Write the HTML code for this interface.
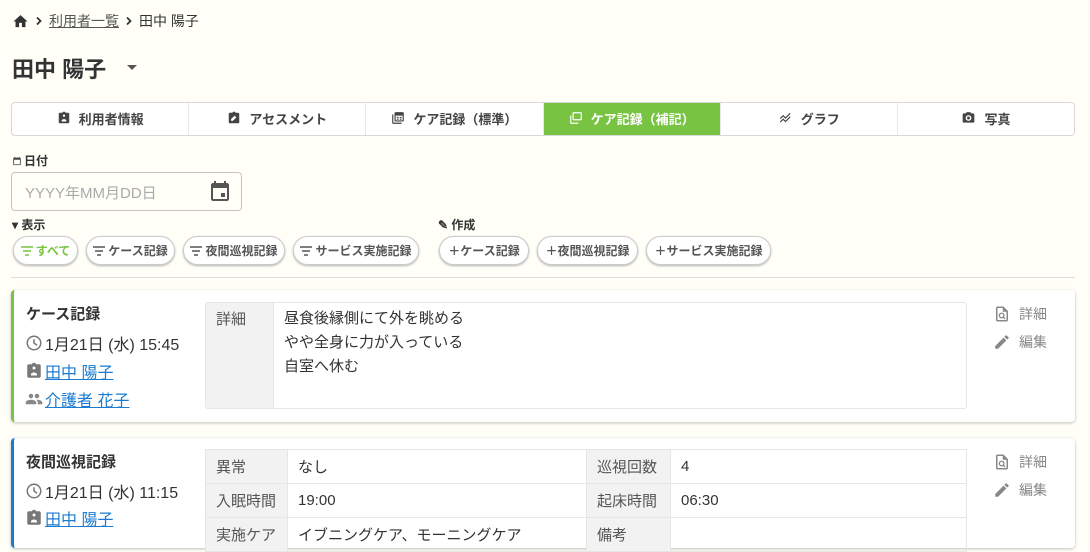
<!DOCTYPE html>
<html><head><meta charset="utf-8">
<style>
*{box-sizing:border-box;margin:0;padding:0}
body{width:1090px;height:530px;overflow:hidden;background:#fffff8;font-family:"Liberation Sans","Noto Sans CJK JP",sans-serif;color:#333;position:relative}
.abs{position:absolute}
svg{display:inline-block;vertical-align:middle}
.tabs{left:11px;top:102px;width:1064px;height:34px;border:1px solid #d8d8d8;border-radius:4px;background:#fff;display:flex;overflow:hidden}
.tab{flex:1;display:flex;align-items:center;justify-content:center;font-size:13px;font-weight:bold;color:#444;border-right:1px solid #e8e8e8;gap:8px;padding-bottom:2px}
.tab:last-child{border-right:none}
.tab.on{background:#79c342;color:#fff}
.chip{position:absolute;top:236px;height:29px;border:1px solid #ccc;border-radius:15px;background:#fff;box-shadow:0 1px 2px rgba(0,0,0,.3);font-size:12px;display:flex;align-items:center;justify-content:center;color:#555;font-weight:bold;gap:3px}
.card{position:absolute;left:11px;width:1064px;background:#fff;border-radius:4px;box-shadow:0 1px 3px rgba(0,0,0,.25)}
.ttl{position:absolute;left:12px;font-size:15px;font-weight:bold;color:#333}
.meta{position:absolute;left:11px;font-size:16px;color:#333;display:flex;align-items:center;gap:2px}
.meta a{color:#1a7bd0;text-decoration:underline}
.act{position:absolute;left:979px;font-size:14px;color:#888;display:flex;align-items:center;gap:8px}
table{border-collapse:collapse;font-size:15px}
td{border:1px solid #e6e6e6;padding:0 10px;height:34px}
td.l{background:#f2f2f2;color:#555}
</style></head><body>

<div class="abs" style="left:12px;top:11px;font-size:14px;display:flex;align-items:center;gap:5px;color:#333">
<svg width="17" height="17" viewBox="0 0 24 24"><path d="M10 20v-6h4v6h5v-8h3L12 3 2 12h3v8z" fill="#333"/></svg>
<svg width="10" height="10" viewBox="0 0 10 10"><path d="M3 1.5L6.5 5 3 8.5" stroke="#333" stroke-width="1.8" fill="none"/></svg><span style="text-decoration:underline;color:#555">利用者一覧</span><svg width="10" height="10" viewBox="0 0 10 10"><path d="M3 1.5L6.5 5 3 8.5" stroke="#333" stroke-width="1.8" fill="none"/></svg><span>田中 陽子</span></div>

<div class="abs" style="left:12px;top:52px;font-size:22px;font-weight:bold;color:#333">田中 陽子</div>
<svg class="abs" style="left:126px;top:64px" width="12" height="7" viewBox="0 0 12 7"><path d="M1 1l5 5 5-5z" fill="#555"/></svg>

<div class="abs tabs">
<div class="tab"><svg width="14" height="14" viewBox="0 0 24 24"><path d="M19 3h-4.2C14.4 1.8 13.3 1 12 1s-2.4.8-2.8 2H5c-1.1 0-2 .9-2 2v14c0 1.1.9 2 2 2h14c1.1 0 2-.9 2-2V5c0-1.1-.9-2-2-2zm-7 3a2 2 0 110 4 2 2 0 010-4zm4 12H8v-1.5c0-1.7 2.7-2.5 4-2.5s4 .8 4 2.5z" fill="#444"/></svg>利用者情報</div>
<div class="tab"><svg width="14" height="14" viewBox="0 0 24 24"><path d="M19 3h-4.2C14.4 1.8 13.3 1 12 1s-2.4.8-2.8 2H5c-1.1 0-2 .9-2 2v14c0 1.1.9 2 2 2h14c1.1 0 2-.9 2-2V5c0-1.1-.9-2-2-2zM10 17H7v-3l6-6 3 3z" fill="#444"/></svg>アセスメント</div>
<div class="tab"><svg width="14" height="14" viewBox="0 0 24 24"><path d="M4 6H2v14c0 1.1.9 2 2 2h14v-2H4zm16-4H8c-1.1 0-2 .9-2 2v12c0 1.1.9 2 2 2h12c1.1 0 2-.9 2-2V4c0-1.1-.9-2-2-2zm0 14H8V8h12z M10 10h3v2h-3zm5 0h3v2h-3zm-5 3h3v2h-3zm5 0h3v2h-3z" fill="#444"/></svg>ケア記録（標準）</div>
<div class="tab on"><svg width="14" height="14" viewBox="0 0 24 24"><path d="M4 8H2v12c0 1.1.9 2 2 2h12v-2H4zm16-6H8c-1.1 0-2 .9-2 2v10c0 1.1.9 2 2 2h12c1.1 0 2-.9 2-2V4c0-1.1-.9-2-2-2zm0 12H8V4h12z" fill="#fff"/></svg>ケア記録（補記）</div>
<div class="tab"><svg width="15" height="14" viewBox="0 0 24 24"><path d="M3 13l5-5 4 4 8-8M3 19l5-5 4 4 8-8" stroke="#444" stroke-width="2" fill="none"/></svg>グラフ</div>
<div class="tab"><svg width="15" height="14" viewBox="0 0 24 24"><path d="M9 2L7.2 4H4c-1.1 0-2 .9-2 2v12c0 1.1.9 2 2 2h16c1.1 0 2-.9 2-2V6c0-1.1-.9-2-2-2h-3.2L15 2zm3 15a5 5 0 110-10 5 5 0 010 10zm0-2.5a2.5 2.5 0 100-5 2.5 2.5 0 000 5z" fill="#444"/></svg>写真</div>
</div>

<div class="abs" style="left:12px;top:152px;font-size:12px;font-weight:bold;display:flex;align-items:center;gap:2px"><svg width="10" height="10" viewBox="0 0 24 24"><path d="M19 4h-1V2h-2v2H8V2H6v2H5c-1.1 0-2 .9-2 2v14c0 1.1.9 2 2 2h14c1.1 0 2-.9 2-2V6c0-1.1-.9-2-2-2zm0 16H5V9h14z" fill="#444"/></svg>日付</div>
<div class="abs" style="left:11px;top:172px;width:231px;height:39px;border:1px solid #c4c4c4;border-radius:4px;background:#fffff8"></div>
<div class="abs" style="left:25px;top:182px;font-size:15px;color:#aaa">YYYY年MM月DD日</div>
<svg class="abs" style="left:208px;top:179px" width="24" height="24" viewBox="0 0 24 24"><path d="M19 4h-1V2h-2v2H8V2H6v2H5c-1.1 0-2 .9-2 2v14c0 1.1.9 2 2 2h14c1.1 0 2-.9 2-2V6c0-1.1-.9-2-2-2zm0 16H5V9h14zm-6-6h4v4h-4z" fill="#555"/></svg>

<div class="abs" style="left:12px;top:216px;font-size:12px;font-weight:bold">▾ 表示</div>
<div class="abs" style="left:438px;top:216px;font-size:12px;font-weight:bold">✎ 作成</div>

<div class="chip" style="left:13px;width:65px;color:#79c342"><svg width="12" height="10" viewBox="0 0 12 10"><path d="M0 1h12M2 5h8M4 9h4" stroke="#79c342" stroke-width="1.5"/></svg>すべて</div>
<div class="chip" style="left:86px;width:89px"><svg width="12" height="10" viewBox="0 0 12 10"><path d="M0 1h12M2 5h8M4 9h4" stroke="#555" stroke-width="1.5"/></svg>ケース記録</div>
<div class="chip" style="left:183px;width:102px"><svg width="12" height="10" viewBox="0 0 12 10"><path d="M0 1h12M2 5h8M4 9h4" stroke="#555" stroke-width="1.5"/></svg>夜間巡視記録</div>
<div class="chip" style="left:293px;width:126px"><svg width="12" height="10" viewBox="0 0 12 10"><path d="M0 1h12M2 5h8M4 9h4" stroke="#555" stroke-width="1.5"/></svg>サービス実施記録</div>
<div class="chip" style="left:439px;width:90px">＋ケース記録</div>
<div class="chip" style="left:537px;width:101px">＋夜間巡視記録</div>
<div class="chip" style="left:646px;width:125px">＋サービス実施記録</div>

<div class="abs" style="left:11px;top:277px;width:1064px;height:1px;background:#ddd"></div>

<div class="card" style="top:290px;height:132px;border-left:3px solid #79c342">
<div class="ttl" style="top:13px">ケース記録</div>
<div class="meta" style="top:41px"><svg width="18" height="18" viewBox="0 0 24 24"><circle cx="12" cy="12" r="9" stroke="#777" stroke-width="2" fill="none"/><path d="M12 7v5l4 3" stroke="#777" stroke-width="2" fill="none"/></svg>1月21日 (水) 15:45</div>
<div class="meta" style="top:69px"><svg width="18" height="18" viewBox="0 0 24 24"><path d="M19 3h-4.2C14.4 1.8 13.3 1 12 1s-2.4.8-2.8 2H5c-1.1 0-2 .9-2 2v14c0 1.1.9 2 2 2h14c1.1 0 2-.9 2-2V5c0-1.1-.9-2-2-2zm-7 3a2 2 0 110 4 2 2 0 010-4zm4 12H8v-1.5c0-1.7 2.7-2.5 4-2.5s4 .8 4 2.5z" fill="#777"/></svg><a>田中 陽子</a></div>
<div class="meta" style="top:97px"><svg width="18" height="18" viewBox="0 0 24 24"><path d="M16 11a3 3 0 100-6 3 3 0 000 6zm-8 0a3 3 0 100-6 3 3 0 000 6zm0 2c-2.3 0-7 1.2-7 3.5V19h14v-2.5C15 14.2 10.3 13 8 13zm8 0c-.3 0-.6 0-1 .1 1.2.8 2 2 2 3.4V19h6v-2.5c0-2.3-4.7-3.5-7-3.5z" fill="#888"/></svg><a>介護者 花子</a></div>
<div class="abs" style="left:191px;top:12px;width:762px;height:107px;border:1px solid #e6e6e6;border-radius:3px;overflow:hidden;display:flex">
<div style="width:68px;background:#f2f2f2;color:#555;font-size:15px;padding:5px 10px;border-right:1px solid #e6e6e6">詳細</div>
<div style="padding:4px 10px;font-size:15px;line-height:24px">昼食後縁側にて外を眺める<br>やや全身に力が入っている<br>自室へ休む</div></div>
<div class="act" style="top:14px"><svg width="18" height="18" viewBox="0 0 24 24"><path d="M14 2H6c-1.1 0-2 .9-2 2v16c0 1.1.9 2 2 2h12c1.1 0 2-.9 2-2V8zm4 18H6V4h7v5h5z" fill="#888"/><circle cx="11.5" cy="14" r="3" stroke="#888" stroke-width="1.8" fill="none"/><path d="M13.5 16l2.5 2.5" stroke="#888" stroke-width="1.8"/></svg>詳細</div>
<div class="act" style="top:42px"><svg width="18" height="18" viewBox="0 0 24 24"><path d="M3 17.25V21h3.75L17.8 9.94l-3.75-3.75zM20.7 7.04a1 1 0 000-1.41l-2.34-2.34a1 1 0 00-1.41 0l-1.83 1.83 3.75 3.75z" fill="#888"/></svg>編集</div>
</div>

<div class="card" style="top:438px;height:110px;border-left:3px solid #1a7bd0">
<div class="ttl" style="top:13px">夜間巡視記録</div>
<div class="meta" style="top:41px"><svg width="18" height="18" viewBox="0 0 24 24"><circle cx="12" cy="12" r="9" stroke="#777" stroke-width="2" fill="none"/><path d="M12 7v5l4 3" stroke="#777" stroke-width="2" fill="none"/></svg>1月21日 (水) 11:15</div>
<div class="meta" style="top:68px"><svg width="18" height="18" viewBox="0 0 24 24"><path d="M19 3h-4.2C14.4 1.8 13.3 1 12 1s-2.4.8-2.8 2H5c-1.1 0-2 .9-2 2v14c0 1.1.9 2 2 2h14c1.1 0 2-.9 2-2V5c0-1.1-.9-2-2-2zm-7 3a2 2 0 110 4 2 2 0 010-4zm4 12H8v-1.5c0-1.7 2.7-2.5 4-2.5s4 .8 4 2.5z" fill="#777"/></svg><a>田中 陽子</a></div>
<table class="abs" style="left:191px;top:11px;width:762px">
<tr><td class="l" style="width:82px">異常</td><td style="width:299px">なし</td><td class="l" style="width:84px">巡視回数</td><td>4</td></tr>
<tr><td class="l">入眠時間</td><td>19:00</td><td class="l">起床時間</td><td>06:30</td></tr>
<tr><td class="l">実施ケア</td><td>イブニングケア、モーニングケア</td><td class="l">備考</td><td></td></tr>
</table>
<div class="act" style="top:14px"><svg width="18" height="18" viewBox="0 0 24 24"><path d="M14 2H6c-1.1 0-2 .9-2 2v16c0 1.1.9 2 2 2h12c1.1 0 2-.9 2-2V8zm4 18H6V4h7v5h5z" fill="#888"/><circle cx="11.5" cy="14" r="3" stroke="#888" stroke-width="1.8" fill="none"/><path d="M13.5 16l2.5 2.5" stroke="#888" stroke-width="1.8"/></svg>詳細</div>
<div class="act" style="top:42px"><svg width="18" height="18" viewBox="0 0 24 24"><path d="M3 17.25V21h3.75L17.8 9.94l-3.75-3.75zM20.7 7.04a1 1 0 000-1.41l-2.34-2.34a1 1 0 00-1.41 0l-1.83 1.83 3.75 3.75z" fill="#888"/></svg>編集</div>
</div>
</body></html>
